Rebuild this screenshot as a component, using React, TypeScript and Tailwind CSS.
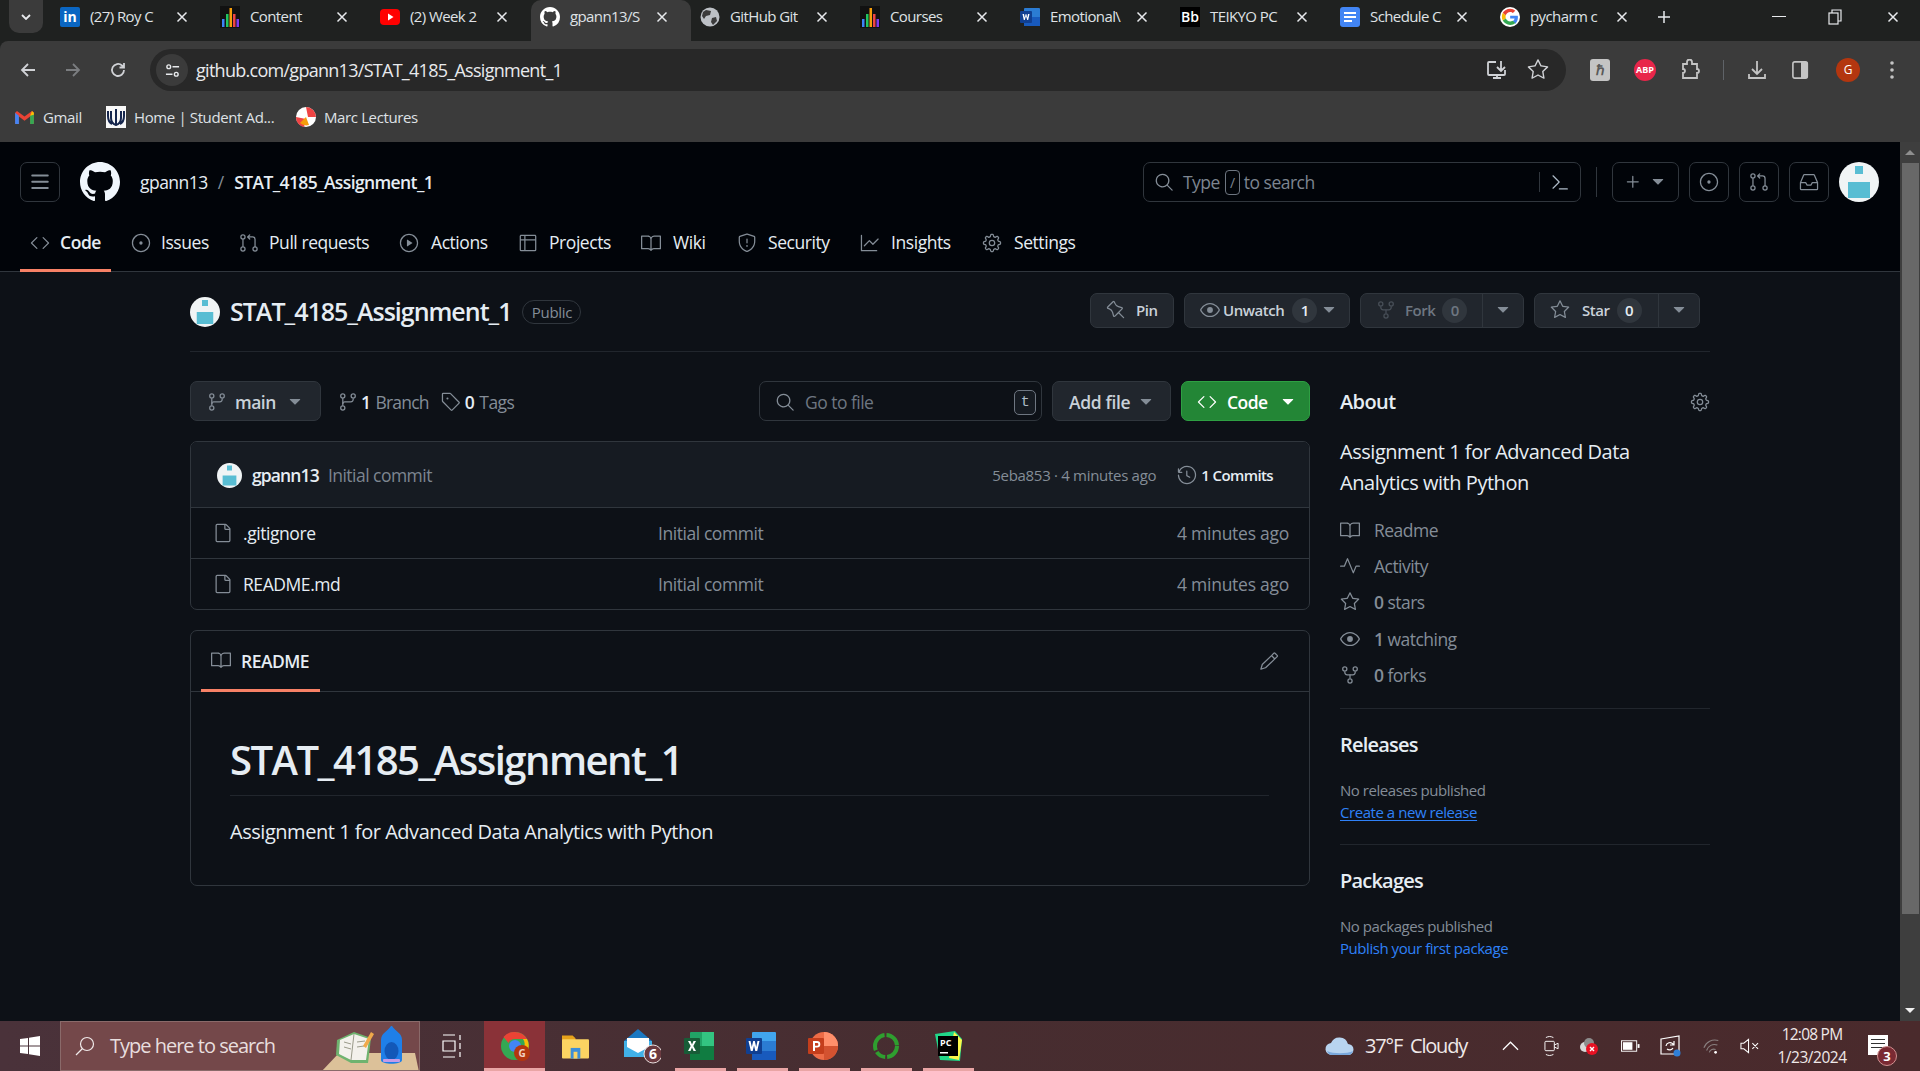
import React from 'react';
import {
  GoBook, GoCode, GoCommandPalette, GoFile, GoGear, GoGitBranch, GoGitPullRequest, GoGraph, GoHistory,
  GoInbox, GoIssueOpened, GoPencil, GoPin, GoPlay, GoPlus, GoPulse, GoRepoForked, GoSearch,
  GoShield, GoStar, GoTable, GoTag, GoTriangleDown, GoEye,
} from 'react-icons/go';

const GithubMark = ({ className }: { className: string }) => (
  <svg viewBox="0 0 16 16" className={className} fill="currentColor">
    <path d="M8 0c4.420 0 8 3.580 8 8a8.013 8.013 0 0 1-5.450 7.590c-.400.080-.550-.170-.550-.380 0-.270.010-1.130.010-2.200 0-.750-.250-1.230-.540-1.480 1.780-.200 3.650-.880 3.650-3.950 0-.880-.310-1.590-.820-2.150.080-.200.360-1.020-.080-2.120 0 0-.670-.220-2.200.820-.640-.180-1.320-.270-2-.270-.680 0-1.360.090-2 .270-1.530-1.030-2.200-.820-2.200-.820-.440 1.100-.160 1.920-.080 2.120-.510.560-.820 1.280-.820 2.150 0 3.060 1.860 3.750 3.640 3.950-.230.200-.440.550-.510 1.070-.460.210-1.610.550-2.330-.660-.150-.240-.600-.830-1.230-.820-.670.010-.270.380.010.530.340.190.730.900.820 1.130.160.450.680 1.310 2.690.940 0 .670.010 1.300.010 1.490 0 .210-.150.450-.550.380A7.995 7.995 0 0 1 0 8c0-4.420 3.580-8 8-8Z" />
  </svg>
);

const Avatar = ({ className }: { className: string }) => (
  <svg viewBox="0 0 40 40" className={className}>
    <circle cx="20" cy="20" r="20" fill="#f0f4f5" />
    <rect x="16" y="4" width="8" height="8" fill="#58bdd3" />
    <rect x="9" y="20" width="22" height="16" fill="#58bdd3" />
  </svg>
);

const tabs = [
  { title: '(27) Roy C', icon: 'in' },
  { title: 'Content', icon: 'bars' },
  { title: '(2) Week 2', icon: 'yt' },
  { title: 'gpann13/S', icon: 'gh', active: true },
  { title: 'GitHub Git', icon: 'globe' },
  { title: 'Courses', icon: 'bars' },
  { title: 'Emotional\\', icon: 'word' },
  { title: 'TEIKYO PC', icon: 'bb' },
  { title: 'Schedule C', icon: 'doc' },
  { title: 'pycharm c', icon: 'g' },
];

const TabIcon = ({ type }: { type: string }) => {
  if (type === 'in') return <div className="w-5 h-5 bg-[#0a66c2] rounded-[2px] text-white text-[14px] font-bold leading-5 text-center">in</div>;
  if (type === 'bars') return (
    <svg viewBox="0 0 20 22" className="w-5 h-[22px]">
      <rect width="20" height="22" fill="#111" />
      <rect x="2" y="13" width="2.5" height="8" fill="#3b82f6" />
      <rect x="6" y="8" width="2.5" height="13" fill="#22c55e" />
      <rect x="9.5" y="2" width="2.5" height="19" fill="#f59e0b" />
      <rect x="13" y="8" width="2.5" height="13" fill="#ef4444" />
      <rect x="16.5" y="13" width="2.5" height="8" fill="#7c3aed" />
    </svg>
  );
  if (type === 'yt') return (
    <svg viewBox="0 0 20 20" className="w-5 h-5">
      <rect y="2" width="20" height="16" rx="4" fill="#f00" />
      <path d="M8 6.5l5.5 3.5L8 13.5z" fill="#fff" />
    </svg>
  );
  if (type === 'gh') return <GithubMark className="w-5 h-5 text-white" />;
  if (type === 'globe') return (
    <svg viewBox="0 0 20 20" className="w-5 h-5">
      <circle cx="10" cy="10" r="9.5" fill="#bdc1c6" />
      <path d="M6 3l5 1-1 4-4 1-2 3-2-3 1-4zM12 11l4-1 1 4-4 4-2-3z" fill="#3b3b3b" />
    </svg>
  );
  if (type === 'word') return (
    <svg viewBox="0 0 20 20" className="w-5 h-5">
      <rect x="4" y="1" width="16" height="18" rx="1" fill="#2b7cd3" />
      <rect x="4" y="10" width="16" height="9" fill="#185abd" />
      <rect y="4" width="12" height="12" rx="1" fill="#103f91" />
      <path d="M2.5 7l1.3 6h1l1.2-4 1.2 4h1l1.3-6H8l-.7 3.6L6.3 7h-.6L4.700 10.600 4 7z" fill="#fff" />
    </svg>
  );
  if (type === 'bb') return <div className="w-5 h-5 bg-black text-white text-[14px] font-semibold leading-5 text-center">Bb</div>;
  if (type === 'doc') return (
    <svg viewBox="0 0 20 20" className="w-5 h-5">
      <rect width="20" height="20" rx="3" fill="#4285f4" />
      <rect x="4" y="5" width="12" height="2" fill="#fff" />
      <rect x="4" y="9" width="12" height="2" fill="#fff" />
      <rect x="4" y="13" width="8" height="2" fill="#fff" />
    </svg>
  );
  return (
    <svg viewBox="0 0 48 48" className="w-5 h-5">
      <circle cx="24" cy="24" r="24" fill="#fff" />
      <path fill="#4285f4" d="M43 24.500c0-1.500-.100-2.600-.400-3.800H24.400v7h10.500c-.500 3-2.400 5.300-5 6.800l7 5.400C41 36 43 30.800 43 24.500z" />
      <path fill="#34a853" d="M24.400 43c5.300 0 9.600-1.700 12.500-4.600l-7-5.400c-1.500 1-3.300 1.700-5.500 1.700-5 0-9-3.300-10.500-7.700l-7.200 5.600C9.800 38.700 16.600 43 24.400 43z" />
      <path fill="#fbbc05" d="M13.900 27c-.400-1.200-.600-2.400-.600-3.700s.200-2.500.600-3.700l-7.200-5.600C5.200 17 4.400 20 4.400 23.300s.800 6.300 2.300 9.300z" />
      <path fill="#ea4335" d="M24.400 11.800c3 0 5.200 1.300 6.500 2.400l5.700-5.500C33.500 5.700 29.700 4 24.400 4 16.600 4 9.800 8.300 6.700 14l7.200 5.600c1.500-4.400 5.500-7.800 10.500-7.800z" />
    </svg>
  );
};

const CloseX = () => (
  <svg viewBox="0 0 12 12" className="w-3 h-3 text-[#e8eaed]" fill="none" stroke="currentColor" strokeWidth="1.500">
    <path d="M1.500 1.500l9 9M10.500 1.500l-9 9" />
  </svg>
);

function TabStrip() {
  return (
    <div className="h-[41px] bg-[#1f2120] flex items-start shrink-0 pl-[9px] text-[15px] text-[#dfe1e5]">
      <div className="w-[34px] h-[33px] bg-[#3b3b3b] rounded-b-[10px] flex items-center justify-center">
        <svg viewBox="0 0 10 6" className="w-[10px] h-[6px]" fill="none" stroke="#e8eaed" strokeWidth="1.800"><path d="M1 1l4 4 4-4" /></svg>
      </div>
      <div className="flex ml-[8px]">
        {tabs.map((t, i) => (
          <div key={i} className={t.active
            ? 'w-[160px] h-[41px] pl-[9px] pb-[8px] flex items-center bg-[#3b3b3b] rounded-t-[10px]'
            : 'w-[160px] h-[33px] pl-[9px] flex items-center'}>
            <div className="w-5 flex justify-center shrink-0"><TabIcon type={t.icon} /></div>
            <div className="ml-[10px] w-[76px] whitespace-nowrap text-[15px] tracking-[-0.04em]">{t.title}</div>
            <div className="ml-[10px]"><CloseX /></div>
          </div>
        ))}
      </div>
      <div className="flex items-center h-[33px]">
        <svg viewBox="0 0 16 16" className="w-4 h-4 ml-[5px]" fill="none" stroke="#e8eaed" strokeWidth="1.500"><path d="M8 2v12M2 8h12" /></svg>
      </div>
      <div className="ml-auto flex items-center h-[33px] pr-[21px]">
        <div className="w-[14px] h-[1.500px] bg-[#e8eaed]" />
        <svg viewBox="0 0 14 16" className="ml-[42px] w-[14px] h-4" fill="none" stroke="#e8eaed" strokeWidth="1.200"><rect x="1" y="4" width="9" height="11" /><path d="M4 4V1h9v11h-3" /></svg>
        <div className="ml-[45px]"><CloseX /></div>
      </div>
    </div>
  );
}

function Toolbar() {
  return (
    <div className="bg-[#3b3b3b] rounded-tl-[8px] shrink-0">
      <div className="h-[59px] flex items-start pt-[8px]">
        <div className="w-[150px] h-[42px] flex items-center pl-[19px] gap-[27px]">
          <svg viewBox="0 0 18 18" className="w-[18px] h-[18px]" fill="none" stroke="#d0d2d6" strokeWidth="1.800"><path d="M16 9H3M9 3L3 9l6 6" /></svg>
          <svg viewBox="0 0 18 18" className="w-[18px] h-[18px]" fill="none" stroke="#7b7d80" strokeWidth="1.800"><path d="M2 9h13M9 3l6 6-6 6" /></svg>
          <svg viewBox="0 0 18 18" className="w-[18px] h-[18px]" fill="none" stroke="#d0d2d6" strokeWidth="1.800"><path d="M15 9a6 6 0 1 1-2-4.500L15 6.500M15 2v4.500h-4.500" /></svg>
        </div>
        <div className="w-[1416px] h-[42px] rounded-full bg-[#282828] flex items-center pl-[6px] pr-[17px]">
          <div className="w-[32px] h-[32px] rounded-full bg-[#3b3b3b] flex items-center justify-center">
            <svg viewBox="0 0 16 16" className="w-[15px] h-[15px]" fill="none" stroke="#e8eaed" strokeWidth="1.500"><circle cx="4" cy="4" r="2" /><path d="M8 4h7M1 12h7" /><circle cx="12" cy="12" r="2" /></svg>
          </div>
          <div className="ml-[8px] text-[#e8eaed] text-[18px] tracking-[-0.04em] font-normal">github.com/gpann13/STAT_4185_Assignment_1</div>
          <div className="ml-auto flex items-center gap-[19px]">
            <svg viewBox="0 0 22 22" className="w-[22px] h-[22px]" fill="none" stroke="#d0d2d6" strokeWidth="1.800"><path d="M10 3H3a1 1 0 0 0-1 1v11a1 1 0 0 0 1 1h15a1 1 0 0 0 1-1v-4M7 19h8M11 16v3M15 2v10M11 8l4 4 4-4" /></svg>
            <GoStar className="w-[22px] h-[22px] text-[#d0d2d6]" />
          </div>
        </div>
        <div className="flex-1 h-[42px] flex items-center pl-[24px]">
          <div className="w-[20px] h-[22px] bg-[#c4c4c4] rounded-[3px] text-[#5a5a5a] text-[14px] font-bold leading-[22px] text-center">ℏ</div>
          <div className="ml-[24px] w-[22px] h-[22px] rounded-full bg-[#e8264a] text-white text-[9px] font-bold leading-[22px] text-center">ABP</div>
          <svg viewBox="0 0 20 22" className="ml-[24px] w-5 h-[22px]" fill="none" stroke="#c4c4c4" strokeWidth="1.800"><path d="M3 5h4V3a2 2 0 0 1 5 0v2h5v5a2 2 0 0 1 0 4v5H3v-5a2 2 0 0 0 0-4z" /></svg>
          <div className="ml-[23px] w-px h-[20px] bg-[#5f6368]" />
          <svg viewBox="0 0 22 22" className="ml-[22px] w-[22px] h-[22px]" fill="none" stroke="#c4c4c4" strokeWidth="1.800"><path d="M11 2v13M6 10l5 5 5-5M3 15v4h16v-4" /></svg>
          <svg viewBox="0 0 20 20" className="ml-[24px] w-[18px] h-[20px]"><rect x="1" y="1" width="16" height="18" rx="2" fill="none" stroke="#c4c4c4" strokeWidth="1.800" /><rect x="10" y="1" width="7" height="18" fill="#c4c4c4" /></svg>
          <div className="ml-[26px] w-[24px] h-[24px] rounded-full bg-[#b3360f] text-white text-[12px] leading-[24px] text-center">G</div>
          <svg viewBox="0 0 4 18" className="ml-[30px] w-1 h-[18px]" fill="#c4c4c4"><circle cx="2" cy="2" r="1.800" /><circle cx="2" cy="9" r="1.800" /><circle cx="2" cy="16" r="1.800" /></svg>
        </div>
      </div>
      <div className="h-[42px] flex items-center text-[15px] text-[#dfe1e5] tracking-[-0.025em] pb-[8px]">
        <svg viewBox="0 0 20 16" className="ml-[15px] w-[19px] h-[15px]">
          <path d="M0 3v11a1 1 0 0 0 1 1h3V7l6 4.500L16 7v8h3a1 1 0 0 0 1-1V3l-2-2-8 6-8-6z" fill="#ea4335" />
          <path d="M0 3v11a1 1 0 0 0 1 1h3V6z" fill="#4285f4" />
          <path d="M20 3v11a1 1 0 0 1-1 1h-3V6z" fill="#34a853" />
          <path d="M16 6l2-5 2 2v2z" fill="#fbbc05" />
        </svg>
        <span className="ml-[9px] w-[38px] whitespace-nowrap">Gmail</span>
        <svg viewBox="0 0 20 22" className="ml-[25px] w-5 h-[22px]"><rect width="20" height="22" fill="#f8f8f8" /><path d="M10 3v17M5 5v7c0 4 2 6 5 7 3-1 5-3 5-7V5M2 5v5c0 4 2 7 4 8M18 5v5c0 4-2 7-4 8" stroke="#16264d" strokeWidth="2" fill="none" /></svg>
        <span className="ml-[8px] w-[137px] whitespace-nowrap">Home | Student Ad...</span>
        <svg viewBox="0 0 20 20" className="ml-[25px] w-5 h-5"><circle cx="10" cy="10" r="10" fill="#fff" /><path d="M10 0a10 10 0 0 1 10 10h-8zM0 10a10 10 0 0 0 8 10l2-8z" fill="#ef4444" /><path d="M4 16l6-6 3 8a10 10 0 0 1-9-2z" fill="#f59e0b" /></svg>
        <span className="ml-[8px] whitespace-nowrap">Marc Lectures</span>
      </div>
    </div>
  );
}

const navItems = [
  { label: 'Code', Icon: GoCode, bold: true, box: 'ml-[20px] w-[91px] pl-[10px]', gap: 'ml-[10px]' },
  { label: 'Issues', Icon: GoIssueOpened, box: 'ml-[20px] w-[78px]', gap: 'ml-[10px]' },
  { label: 'Pull requests', Icon: GoGitPullRequest, box: 'ml-[30px] w-[128px]', gap: 'ml-[10px]' },
  { label: 'Actions', Icon: GoPlay, box: 'ml-[32px] w-[88px]', gap: 'ml-[12px]' },
  { label: 'Projects', Icon: GoTable, box: 'ml-[31px] w-[92px]', gap: 'ml-[11px]' },
  { label: 'Wiki', Icon: GoBook, box: 'ml-[31px] w-[64px]', gap: 'ml-[12px]' },
  { label: 'Security', Icon: GoShield, box: 'ml-[32px] w-[92px]', gap: 'ml-[11px]' },
  { label: 'Insights', Icon: GoGraph, box: 'ml-[31px] w-[91px]', gap: 'ml-[11px]' },
  { label: 'Settings', Icon: GoGear, box: 'ml-[31px] w-[93px]', gap: 'ml-[12px]' },
];

function GithubHeader() {
  return (
    <div className="bg-[#010409] border-b border-[#30363d] h-[130px] shrink-0">
      <div className="h-[80px] flex items-center pl-[20px] pr-[21px]">
        <div className="w-10 h-10 border border-[#30363d] rounded-[7px] flex items-center justify-center">
          <svg viewBox="0 0 16 16" className="w-5 h-5 text-[#848d97]" fill="currentColor">
            <path d="M1 2.750A.750.750 0 0 1 1.750 2h12.500a.750.750 0 0 1 0 1.500H1.750A.750.750 0 0 1 1 2.750Zm0 5A.750.750 0 0 1 1.750 7h12.500a.750.750 0 0 1 0 1.500H1.750A.750.750 0 0 1 1 7.750ZM1.750 12h12.500a.750.750 0 0 1 0 1.500H1.750a.750.750 0 0 1 0-1.500Z" />
          </svg>
        </div>
        <GithubMark className="ml-5 w-10 h-10 text-[#f0f6fc]" />
        <span className="ml-5 text-[17.5px] text-[#e6edf3] tracking-[-0.03em]">gpann13</span>
        <span className="ml-[10px] text-[17.5px] text-[#848d97]">/</span>
        <span className="ml-[10px] text-[17.5px] font-semibold text-[#e6edf3] tracking-[-0.035em]">STAT_4185_Assignment_1</span>
        <div className="ml-auto w-[438px] h-10 border border-[#30363d] rounded-[7px] flex items-center pl-[10px] pr-[10px] text-[#7d8590] text-[17.5px] tracking-[-0.03em]">
          <GoSearch className="w-5 h-5 text-[#848d97]" />
          <span className="ml-[9px]">Type</span>
          <span className="ml-[5px] w-[15px] h-[25px] border border-[#6e7681] rounded-[4px] text-[14px] leading-[23px] text-center">/</span>
          <span className="ml-[4px]">to search</span>
          <div className="ml-auto w-px h-[20px] bg-[#30363d]" />
          <GoCommandPalette className="ml-[10px] w-5 h-5 text-[#adbac7]" />
        </div>
        <div className="ml-[15px] w-px h-[30px] bg-[#30363d]" />
        <div className="ml-[15px] w-[67px] h-10 border border-[#30363d] rounded-[7px] flex items-center justify-center gap-[8px]">
          <GoPlus className="w-5 h-5 text-[#848d97]" />
          <GoTriangleDown className="w-5 h-5 -ml-[3px] text-[#848d97]" />
        </div>
        <div className="ml-[10px] w-10 h-10 border border-[#30363d] rounded-[7px] flex items-center justify-center"><GoIssueOpened className="w-5 h-5 text-[#848d97]" /></div>
        <div className="ml-[10px] w-10 h-10 border border-[#30363d] rounded-[7px] flex items-center justify-center"><GoGitPullRequest className="w-5 h-5 text-[#848d97]" /></div>
        <div className="ml-[10px] w-10 h-10 border border-[#30363d] rounded-[7px] flex items-center justify-center"><GoInbox className="w-5 h-5 text-[#848d97]" /></div>
        <Avatar className="ml-[10px] w-10 h-10" />
      </div>
      <div className="flex h-[50px] items-start text-[17.5px] text-[#e6edf3] tracking-[-0.025em] whitespace-nowrap">
        {navItems.map((n) => (
          <div key={n.label} className={n.bold
            ? 'h-[50px] pb-[6px] border-b-[3px] border-[#f78166] flex items-center ' + n.box
            : 'h-[41px] flex items-center ' + n.box}>
            <n.Icon className="w-5 h-5 text-[#848d97] shrink-0" />
            <span className={n.gap + (n.bold ? ' font-semibold' : '')}>{n.label}</span>
          </div>
        ))}
      </div>
    </div>
  );
}

function CountBadge({ n, dim }: { n: string; dim?: boolean }) {
  return <span className={dim
    ? 'block w-[25px] h-[25px] rounded-full bg-[#30363d] text-[#6e7681] text-[15px] leading-[25px] text-center'
    : 'block w-[25px] h-[25px] rounded-full bg-[#30363d] text-[#e6edf3] text-[15px] leading-[25px] text-center'}>{n}</span>;
}

function RepoHead() {
  return (
    <div className="mx-[190px] h-[80px] border-b border-[#21262d] flex items-center">
      <Avatar className="w-[30px] h-[30px]" />
      <span className="ml-[10px] mt-[1px] text-[25px] font-semibold text-[#e6edf3] tracking-[-0.04em] whitespace-nowrap">STAT_4185_Assignment_1</span>
      <span className="ml-[11px] w-[59px] h-[24px] border border-[#30363d] rounded-full text-[15px] leading-[22px] text-center text-[#848d97] tracking-[-0.02em] font-medium">Public</span>
      <div className="ml-auto mb-[3px] pr-[10px] flex items-center gap-[10px] text-[15px] font-semibold text-[#c9d1d9] tracking-[-0.03em]">
        <div className="w-[84px] h-[35px] bg-[#21262d] border border-[#30363d] rounded-[7px] flex items-center pl-[15px]">
          <GoPin className="w-5 h-5 text-[#848d97]" />
          <span className="ml-[10px]">Pin</span>
        </div>
        <div className="w-[166px] h-[35px] bg-[#21262d] border border-[#30363d] rounded-[7px] flex items-center pl-[15px]">
          <GoEye className="w-5 h-5 text-[#848d97]" />
          <span className="ml-[3px]">Unwatch</span>
          <span className="ml-[8px]"><CountBadge n="1" /></span>
          <GoTriangleDown className="ml-[2px] w-5 h-5 text-[#848d97]" />
        </div>
        <div className="w-[164px] h-[35px] bg-[#21262d] border border-[#30363d] rounded-[7px] flex items-center pl-[15px] text-[#6e7681]">
          <GoRepoForked className="w-5 h-5 text-[#484f58]" />
          <span className="ml-[9px]">Fork</span>
          <span className="ml-[7px]"><CountBadge n="0" dim /></span>
          <div className="ml-auto w-[41px] h-full border-l border-[#30363d] flex items-center justify-center"><GoTriangleDown className="w-5 h-5 text-[#848d97]" /></div>
        </div>
        <div className="w-[166px] h-[35px] bg-[#21262d] border border-[#30363d] rounded-[7px] flex items-center pl-[15px]">
          <GoStar className="w-5 h-5 text-[#848d97]" />
          <span className="ml-[12px]">Star</span>
          <span className="ml-[7px]"><CountBadge n="0" /></span>
          <div className="ml-auto w-[41px] h-full border-l border-[#30363d] flex items-center justify-center"><GoTriangleDown className="w-5 h-5 text-[#848d97]" /></div>
        </div>
      </div>
    </div>
  );
}

function FileBar() {
  return (
    <div className="h-10 flex items-center text-[17.5px] tracking-[-0.03em]">
      <div className="w-[131px] h-10 pt-[2px] bg-[#21262d] border border-[#30363d] rounded-[7px] flex items-center pl-[16px] font-semibold text-[#c9d1d9]">
        <GoGitBranch className="w-5 h-5 text-[#848d97]" />
        <span className="ml-[8px]">main</span>
        <GoTriangleDown className="ml-[9px] w-5 h-5 text-[#848d97]" />
      </div>
      <div className="flex items-center pt-[2px]">
        <GoGitBranch className="ml-[17px] w-5 h-5 text-[#848d97]" />
        <span className="ml-[3px] font-semibold text-[#e6edf3]">1</span>
        <span className="ml-[5px] text-[#848d97] tracking-[-0.045em]">Branch</span>
        <GoTag className="ml-[12px] w-5 h-5 text-[#848d97]" />
        <span className="ml-[4px] font-semibold text-[#e6edf3]">0</span>
        <span className="ml-[5px] text-[#848d97]">Tags</span>
      </div>
      <div className="ml-auto w-[283px] h-10 pt-[2px] border border-[#30363d] rounded-[7px] flex items-center pl-[15px] pr-[5px] text-[#6e7681]">
        <GoSearch className="w-5 h-5 text-[#848d97]" />
        <span className="ml-[10px]">Go to file</span>
        <span className="ml-auto w-[22px] h-[25px] border border-[#6e7681] rounded-[5px] bg-[#161b22] text-[#adbac7] font-['Liberation_Mono',monospace] text-[15px] leading-[24px] text-center">t</span>
      </div>
      <div className="ml-[10px] w-[119px] h-10 pt-[2px] bg-[#21262d] border border-[#30363d] rounded-[7px] flex items-center pl-[16px] font-semibold text-[#c9d1d9]">
        <span className="tracking-[-0.02em]">Add file</span>
        <GoTriangleDown className="ml-[6px] w-5 h-5 text-[#848d97]" />
      </div>
      <div className="ml-[10px] w-[129px] h-10 pt-[2px] bg-[#238636] border border-[#2ea043] rounded-[7px] flex items-center pl-[15px] font-semibold text-white">
        <GoCode className="w-5 h-5" />
        <span className="ml-[10px]">Code</span>
        <GoTriangleDown className="ml-[10px] w-5 h-5" />
      </div>
    </div>
  );
}

function FileRow({ name, last }: { name: string; last?: boolean }) {
  return (
    <div className={last
      ? 'h-[50px] flex items-center pl-[22px] pr-[20px] text-[17.5px] tracking-[-0.025em]'
      : 'h-[51px] flex items-center pl-[22px] pr-[20px] text-[17.5px] tracking-[-0.025em] border-b border-[#30363d]'}>
      <GoFile className="w-5 h-5 text-[#848d97]" />
      <span className="ml-[10px] w-[415px] text-[#e6edf3]">{name}</span>
      <span className="text-[#848d97]">Initial commit</span>
      <span className="ml-auto text-[#848d97] tracking-[-0.015em]">4 minutes ago</span>
    </div>
  );
}

function CommitBox() {
  return (
    <div className="mt-5 border border-[#30363d] rounded-[7px] overflow-hidden">
      <div className="h-[66px] pt-[1px] bg-[#161b22] border-b border-[#30363d] flex items-center pl-[26px] pr-[36px] text-[17.5px] tracking-[-0.03em]">
        <Avatar className="w-[25px] h-[25px]" />
        <span className="ml-[10px] font-semibold text-[#e6edf3] tracking-[-0.05em]">gpann13</span>
        <span className="ml-[9px] text-[#7d8590]">Initial commit</span>
        <span className="ml-auto text-[15px] text-[#848d97] tracking-[-0.02em]">5eba853 · 4 minutes ago</span>
        <GoHistory className="ml-[21px] w-5 h-5 text-[#848d97]" />
        <span className="ml-[4px] text-[15px] font-semibold text-[#e6edf3] tracking-[-0.04em]">1 Commits</span>
      </div>
      <FileRow name=".gitignore" />
      <FileRow name="README.md" last />
    </div>
  );
}

function Readme() {
  return (
    <div className="mt-5 h-[256px] border border-[#30363d] rounded-[7px]">
      <div className="h-[61px] border-b border-[#30363d] flex items-start pl-[10px] pr-[30px]">
        <div className="w-[119px] h-[61px] border-b-[3px] border-[#f78166] flex items-center pl-[10px] pt-[3px]">
          <GoBook className="w-5 h-5 -mt-[3px] text-[#848d97]" />
          <span className="ml-[10px] text-[17.5px] font-semibold text-[#e6edf3] tracking-[-0.03em]">README</span>
        </div>
        <GoPencil className="ml-auto mt-[20px] w-5 h-5 text-[#848d97]" />
      </div>
      <div className="pl-[39px] pr-10 text-[#e6edf3]">
        <div className="h-[104px] border-b border-[#21262d] flex items-center pt-[32px]">
          <span className="text-[40px] font-semibold tracking-[-0.038em] leading-none">STAT_4185_Assignment_1</span>
        </div>
        <div className="mt-[21px] text-[20px] tracking-[-0.023em]">Assignment 1 for Advanced Data Analytics with Python</div>
      </div>
    </div>
  );
}

function SideStat({ Icon, children }: { Icon: React.ComponentType<{ className?: string }>; children: React.ReactNode }) {
  return (
    <div className="h-[36.200px] flex items-center text-[17.5px] text-[#848d97] tracking-[-0.03em]">
      <Icon className="w-5 h-5 text-[#848d97]" />
      <span className="ml-[14px]">{children}</span>
    </div>
  );
}

function Sidebar() {
  return (
    <div className="w-[370px] shrink-0 text-[#e6edf3]">
      <div className="h-10 pt-[2px] flex items-center justify-between">
        <span className="text-[20px] font-semibold tracking-[-0.03em]">About</span>
        <GoGear className="w-5 h-5 text-[#848d97]" />
      </div>
      <div className="mt-[16px] text-[20px] leading-[30.500px] tracking-[-0.023em]">Assignment 1 for Advanced Data<br />Analytics with Python</div>
      <div className="mt-[14px]">
        <SideStat Icon={GoBook}>Readme</SideStat>
        <SideStat Icon={GoPulse}>Activity</SideStat>
        <SideStat Icon={GoStar}><b className="font-semibold">0</b> stars</SideStat>
        <SideStat Icon={GoEye}><b className="font-semibold">1</b> watching</SideStat>
        <SideStat Icon={GoRepoForked}><b className="font-semibold">0</b> forks</SideStat>
      </div>
      <div className="mt-[15px] border-t border-[#21262d] pt-[22px] h-[136px]">
        <div className="text-[20px] leading-[28px] font-semibold tracking-[-0.04em]">Releases</div>
        <div className="mt-[20px] text-[15px] leading-[22px] text-[#848d97] tracking-[-0.03em]">No releases published</div>
        <div className="text-[15px] leading-[22px] text-[#2f81f7] underline underline-offset-2 tracking-[-0.03em]">Create a new release</div>
      </div>
      <div className="border-t border-[#21262d] pt-[22px]">
        <div className="text-[20px] leading-[28px] font-semibold tracking-[-0.04em]">Packages</div>
        <div className="mt-[20px] text-[15px] leading-[22px] text-[#848d97] tracking-[-0.03em]">No packages published</div>
        <div className="text-[15px] leading-[22px] text-[#2f81f7] tracking-[-0.03em]">Publish your first package</div>
      </div>
    </div>
  );
}

function Scrollbar() {
  return (
    <div className="w-5 shrink-0 bg-[#3e3e3e] flex flex-col items-center">
      <div className="h-[21px] flex items-center"><div className="w-0 h-0 border-x-[5px] border-x-transparent border-b-[5px] border-b-[#8e8e8e]" /></div>
      <div className="w-full h-[751px] pl-[2px] pr-[1px]"><div className="w-full h-full bg-[#686868]" /></div>
      <div className="mt-auto h-[21px] flex items-center"><div className="w-0 h-0 border-x-[5px] border-x-transparent border-t-[5px] border-t-[#f0f0f0]" /></div>
    </div>
  );
}

function TaskSlot({ w, on, children }: { w: string; on?: boolean; children: React.ReactNode }) {
  return (
    <div className={'relative h-full flex items-center justify-center ' + w}>
      {children}
      {on && <div className="absolute bottom-0 left-0 right-0 h-[3px] bg-[#e9a5a5]" />}
    </div>
  );
}

function Taskbar() {
  return (
    <div className="h-[50px] shrink-0 flex items-stretch bg-gradient-to-r from-[#4a323a] via-[#472d30] to-[#4a2a2c] text-[#f0eaea]">
      <div className="w-[60px] flex items-center justify-center">
        <svg viewBox="0 0 20 20" className="w-5 h-5" fill="#fff"><path d="M0 3l8-1.100V9.500H0zM9 1.700L20 0v9.500H9zM0 10.500h8v7.600L0 17zM9 10.500h11V20L9 18.300z" /></svg>
      </div>
      <div className="w-[360px] bg-[#74484a] border border-[#8a6a6a] flex items-center relative overflow-hidden">
        <svg viewBox="0 0 20 20" className="ml-[14px] w-5 h-5" fill="none" stroke="#f0eaea" strokeWidth="1.200"><circle cx="12" cy="8" r="6.500" /><path d="M7.500 12.500L1 19" /></svg>
        <span className="ml-[15px] text-[20px] tracking-[-0.05em] text-[#e8dede]">Type here to search</span>
        <svg viewBox="0 0 100 50" className="absolute right-0 top-0 w-[100px] h-[50px]">
          <path d="M2 50l18-19h76l4 19z" fill="#dcc199" />
          <path d="M18 18l17-8 17 6-3 25-17 0-15-8z" fill="#6fb36f" />
          <path d="M21 18l14-6 15 5-3 21-15 0-12-6z" fill="#f3f1ec" />
          <path d="M35 12l-3 26M25 20l7 2M25 25l7 2M38 20l8-1M38 25l7-1" stroke="#9a9a8a" strokeWidth="1" fill="none" />
          <path d="M44 24l8-14 3 2-8 14z" fill="#f0a94a" />
          <path d="M62 38V18C62 11 68 10 72 4h1c4 6 10 7 10 14v20c0 5-21 5-21 0z" fill="#1f7fe8" />
          <ellipse cx="72.500" cy="29" rx="7" ry="9" fill="#1358b8" />
          <rect x="64" y="37" width="17" height="3" rx="1" fill="#c49be8" />
        </svg>
      </div>
      <div className="w-[64px] flex items-center justify-center">
        <svg viewBox="0 0 20 24" className="w-5 h-[24px]" fill="none" stroke="#fff" strokeWidth="1.200"><path d="M1 1h12M1 23h12M1 7h12v10H1zM18 1v5M18 9v6M18 18v5" /></svg>
      </div>
      <TaskSlot w="w-[61px] bg-[#8a3238]" on>
        <svg viewBox="0 0 30 30" className="w-[30px] h-[30px]">
          <circle cx="15" cy="15" r="14" fill="#34a853" />
          <path d="M15 1a14 14 0 0 1 12 7H15a7 7 0 0 0-6.500 4L3.500 6A14 14 0 0 1 15 1z" fill="#ea4335" />
          <path d="M27 8a14 14 0 0 1-8 20l5-12a8 8 0 0 0-1-8z" fill="#fbbc05" />
          <circle cx="15" cy="15" r="6" fill="#4285f4" />
          <circle cx="22" cy="22" r="8" fill="#b3360f" />
          <text x="22" y="26" textAnchor="middle" fontSize="10" fill="#f0d0c0" fontWeight="700">G</text>
        </svg>
      </TaskSlot>
      <TaskSlot w="w-[69px] pr-[8px]">
        <svg viewBox="0 0 28 28" className="w-[27px] h-[28px]">
          <path d="M0 3h11l3 3h0v4H0z" fill="#e7a21b" />
          <rect y="7" width="28" height="20" rx="1" fill="#fcd462" />
          <rect x="9" y="16" width="10" height="11" fill="#3d8fd8" />
          <rect x="12" y="20" width="4" height="7" fill="#fcd462" />
        </svg>
      </TaskSlot>
      <TaskSlot w="w-[61px] pr-[6px]">
        <svg viewBox="0 0 38 36" className="w-[38px] h-[36px]">
          <path d="M1 13L15 1l14 12v16H1z" fill="#1a78c2" />
          <path d="M1 13h28v16H1z" fill="#41b1e8" />
          <path d="M4 10h22v9l-11 6-11-6z" fill="#fff" />
          <circle cx="30" cy="26" r="9" fill="#6a3a40" stroke="#e8dede" strokeWidth="1" />
          <text x="30" y="31" textAnchor="middle" fontSize="14" fill="#fff" fontWeight="700">6</text>
        </svg>
      </TaskSlot>
      <TaskSlot w="w-[51px] pr-[4px]" on>
        <svg viewBox="0 0 30 30" className="w-[30px] h-[30px]">
          <rect x="6" y="1" width="24" height="28" rx="1" fill="#21a366" />
          <rect x="18" y="1" width="12" height="14" fill="#33c481" />
          <rect x="6" y="15" width="24" height="14" fill="#107c41" />
          <rect y="7" width="16" height="16" rx="1" fill="#185c37" />
          <path d="M4 10h2.500L8 13.500 9.500 10H12l-2.700 5 2.700 5H9.500L8 16.500 6.500 20H4l2.700-5z" fill="#fff" />
        </svg>
      </TaskSlot>
      <div className="w-[11px]" />
      <TaskSlot w="w-[51px] pr-[4px]" on>
        <svg viewBox="0 0 30 30" className="w-[30px] h-[30px]">
          <rect x="6" y="1" width="24" height="28" rx="1" fill="#41a5ee" />
          <rect x="6" y="10" width="24" height="10" fill="#2b7cd3" />
          <rect x="6" y="20" width="24" height="9" fill="#185abd" />
          <rect y="7" width="16" height="16" rx="1" fill="#103f91" />
          <path d="M2.500 10h2l1.300 6 1.400-6h1.600l1.400 6 1.300-6h2l-2.300 10H9.300L8 14.500 6.700 20H4.800z" fill="#fff" />
        </svg>
      </TaskSlot>
      <div className="w-[11px]" />
      <TaskSlot w="w-[51px] pr-[4px]" on>
        <svg viewBox="0 0 30 30" className="w-[30px] h-[30px]">
          <circle cx="16" cy="15" r="14" fill="#ed6c47" />
          <path d="M16 1a14 14 0 0 1 14 14H16z" fill="#ff8f6b" />
          <path d="M16 29a14 14 0 0 0 14-14H16z" fill="#d35230" />
          <rect y="7" width="16" height="16" rx="1" fill="#c43e1c" />
          <path d="M5 10h4a3.300 3.300 0 0 1 0 6.600H7V20H5zm2 2v2.800h2a1.400 1.400 0 0 0 0-2.800z" fill="#fff" />
        </svg>
      </TaskSlot>
      <div className="w-[11px]" />
      <TaskSlot w="w-[51px] pr-[2px]" on>
        <svg viewBox="0 0 28 28" className="w-7 h-7" fill="none"><circle cx="14" cy="14" r="11" stroke="#2f9e2f" strokeWidth="4" strokeDasharray="16 2 10 2 20 2" /></svg>
      </TaskSlot>
      <div className="w-[11px]" />
      <TaskSlot w="w-[51px] pr-[2px]" on>
        <svg viewBox="0 0 32 32" className="w-[32px] h-[32px]">
          <path d="M3 4l20-3 7 8-2 22-20-1z" fill="#21d789" />
          <path d="M22 2l8 8-3 20-10-2z" fill="#fcf84a" />
          <rect x="6" y="6" width="20" height="20" fill="#000" />
          <text x="8" y="16" fontSize="9" fill="#fff" fontWeight="700">PC</text>
          <rect x="8" y="22" width="8" height="1.500" fill="#fff" />
        </svg>
      </TaskSlot>
      <div className="ml-auto flex items-center h-full pr-[16px]">
        <svg viewBox="0 0 30 20" className="w-[30px] h-5"><path d="M7 19a6 6 0 0 1-1-12 9 9 0 0 1 17 1 5.500 5.500 0 0 1 0 11z" fill="#b8d4f0" /><path d="M2 15c6 3 20 3 26 0-1 3-3 4-5 4H7c-3 0-4-2-5-4z" fill="#7aa8dc" /></svg>
        <span className="ml-[10px] text-[20px] tracking-[-0.06em] text-[#efe8e8] whitespace-nowrap">37°F&nbsp; Cloudy</span>
        <svg viewBox="0 0 18 10" className="ml-[35px] w-[17px] h-[10px]" fill="none" stroke="#fff" strokeWidth="1.300"><path d="M1 9l8-8 8 8" /></svg>
        <svg viewBox="0 0 16 22" className="ml-[25px] w-[15px] h-[22px]" fill="none" stroke="#fff" strokeWidth="1"><path d="M2 2c3-1.500 5-1.500 8 0M2 20c3 1.500 5 1.500 8 0" /><rect x="1" y="6" width="10" height="10" rx="1" /><path d="M11 10l4-2v6l-4-2" /></svg>
        <svg viewBox="0 0 20 18" className="ml-[19px] w-5 h-[18px]"><circle cx="7" cy="10" r="5" fill="#d8d8d8" /><circle cx="11" cy="6" r="5" fill="#8c8c8c" /><circle cx="14" cy="12" r="6" fill="#e81123" /><path d="M12 10l4 4M16 10l-4 4" stroke="#fff" strokeWidth="1.400" /></svg>
        <svg viewBox="0 0 20 12" className="ml-[23px] w-[19px] h-3"><rect x=".5" y=".5" width="16" height="11" fill="none" stroke="#fff" /><rect x="2" y="2" width="10" height="8" fill="#fff" /><rect x="17.500" y="4" width="2" height="4" fill="#fff" /></svg>
        <svg viewBox="0 0 22 22" className="ml-[20px] w-[22px] h-[22px]" fill="none" stroke="#fff" strokeWidth="1.200"><path d="M1 4l18-3v18H1zM6 11a4 4 0 0 1 7-2l1 1M14 6v4h-4M13 13a4 4 0 0 1-6 1" /><circle cx="17" cy="18" r="3.500" fill="#2f7fd8" stroke="none" /></svg>
        <svg viewBox="0 0 20 20" className="ml-[21px] w-[18px] h-[18px]" fill="none" stroke="#8a8080" strokeWidth="1.200"><path d="M1 12a13 13 0 0 1 16-8M4 15a9 9 0 0 1 12-6M7 17a5 5 0 0 1 7-3" /><circle cx="14" cy="17" r="1.500" fill="#fff" stroke="none" /></svg>
        <svg viewBox="0 0 20 18" className="ml-[19px] w-[19px] h-[18px]" fill="none" stroke="#fff" strokeWidth="1.100"><path d="M1 6h3l5-4v14l-5-4H1zM13 6l6 6M19 6l-6 6" /></svg>
        <div className="ml-[16px] w-[74px] flex flex-col items-center text-[15.500px] leading-[23px] tracking-[-0.03em] text-[#efe8e8]">
          <span className="tracking-[-0.05em]">12:08 PM</span>
          <span>1/23/2024</span>
        </div>
        <div className="ml-[13px] w-[42px] h-full relative">
          <div className="absolute left-[6px] top-[14px] w-5 h-5 bg-white flex flex-col gap-[3px] pt-[4px] px-[3px]">
            <div className="h-px bg-[#333]" /><div className="h-px bg-[#333]" /><div className="h-px bg-[#333]" />
          </div>
          <div className="absolute left-[15px] top-[25px] w-5 h-5 rounded-full bg-[#7a2a33] border border-[#d09090] text-white text-[13px] leading-[18px] font-bold text-center">3</div>
        </div>
      </div>
    </div>
  );
}

export default function App() {
  return (
    <div className="w-[1920px] h-[1071px] overflow-hidden flex flex-col bg-[#1f2120] font-['Open_Sans',sans-serif]">
      <TabStrip />
      <Toolbar />
      <div className="flex-1 flex min-h-0">
        <div className="flex-1 min-w-0 bg-[#0d1117]">
          <GithubHeader />
          <RepoHead />
          <div className="mx-[190px] mt-[29px] flex gap-[30px]">
            <div className="flex-1 min-w-0">
              <FileBar />
              <CommitBox />
              <Readme />
            </div>
            <Sidebar />
          </div>
        </div>
        <Scrollbar />
      </div>
      <Taskbar />
    </div>
  );
}
